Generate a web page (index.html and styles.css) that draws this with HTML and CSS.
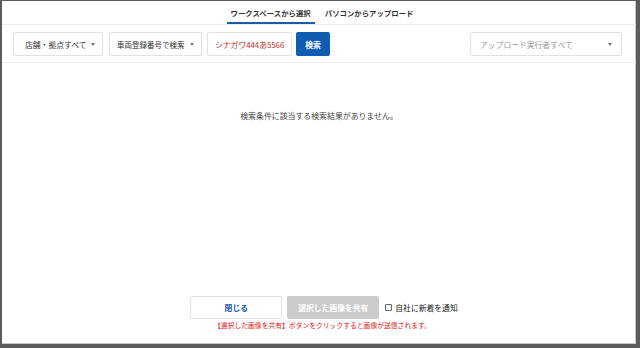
FILE: index.html
```html
<!DOCTYPE html>
<html lang="ja">
<head>
    <meta charset="UTF-8">
    <meta name="viewport" content="width=device-width, initial-scale=1.0">
    <title>画像を選択</title>
    <link rel="stylesheet" href="styles.css">
</head>
<body>

    <div class="modal">
        <div class="tabs">
            <span class="tab active">ワークスペースから選択</span>
            <span class="tab">パソコンからアップロード</span>
        </div>

        <div class="filters">
            <div class="select w1">店舗・拠点すべて<i class="arrow"></i></div>
            <div class="select w2">車両登録番号で検索<i class="arrow"></i></div>
            <div class="input">シナガワ444あ5566</div>
            <button class="btn-search">検索</button>
            <div class="select w3 placeholder">アップロード実行者すべて<i class="arrow"></i></div>
        </div>

        <div class="results">
            <p class="empty">検索条件に該当する検索結果がありません。</p>
        </div>

        <div class="footer">
            <div class="actions">
                <button class="btn-close">閉じる</button>
                <button class="btn-share" disabled>選択した画像を共有</button>
                <label class="notify"><span class="check"></span>自社に新着を通知</label>
            </div>
            <p class="note">【選択した画像を共有】ボタンをクリックすると画像が送信されます。</p>
        </div>
    </div>

</body>
</html>
```

FILE: styles.css
```css
* { box-sizing: border-box; }
body { margin: 0; font-family: "Noto Sans CJK JP", "Noto Sans", sans-serif; color: #333; background: #fff; }
.modal { height: 348px; display: flex; flex-direction: column; border-style: solid; border-color: #5c5c5c; border-width: 1px 4px 4px 2px; box-shadow: inset -1px -1px 0 #c8c8c8; }

.tabs { display: flex; justify-content: center; gap: 6px; border-bottom: 1px solid #ececec; padding-top: 6px; padding-left: 6px; }
.tab { font-size: 7.4px; font-weight: bold; color: #333; line-height: 11px; padding: 0 4px 4px; border-bottom: 2px solid transparent; }
.tab.active { border-bottom-color: #1c5ba8; }

.filters { display: flex; align-items: center; padding: 7px 14px 6px 11px; border-bottom: 1px solid #ececec; }
.select, .input { height: 24px; border: 1px solid #e2e2e2; border-radius: 2px; font-size: 7.8px; display: flex; align-items: center; background: #fff; }
.select { position: relative; padding-left: 11px; }
.w1 { width: 90px; margin-right: 6px; }
.w2 { width: 93px; margin-right: 5px; padding-left: 7px; font-size: 7.5px; }
.w3 { width: 152px; margin-left: auto; padding-left: 9px; }
.placeholder { color: #9a9a9a; }
.arrow { position: absolute; right: 7px; top: 10px; border-left: 2px solid transparent; border-right: 2px solid transparent; border-top: 3px solid #777; }
.w3 .arrow { right: 9px; }
.input { width: 85px; padding-left: 7px; color: #c62828; margin-right: 4px; }
.btn-search { width: 34px; height: 24px; border: none; border-radius: 2px; background: #0f5db3; color: #fff; font-family: inherit; font-size: 7.8px; font-weight: bold; padding: 0; }

.results { flex: 1; }
.empty { margin: 48px 0 0; text-align: center; font-size: 7.9px; line-height: 10px; color: #444; }

.footer { padding-bottom: 14px; }
.actions { display: flex; justify-content: center; align-items: center; gap: 5px; padding-left: 10px; }
button { font-family: inherit; cursor: pointer; }
.btn-close, .btn-share { width: 92px; height: 23px; border-radius: 2px; font-size: 7.8px; font-weight: bold; padding: 0; }
.btn-close { background: #fff; border: 1px solid #e2e2e2; color: #1c5ba8; }
.btn-share { background: #cccccc; border: none; color: #fff; }
.notify { display: flex; align-items: center; font-size: 7.8px; color: #222; margin-left: 1px; }
.check { width: 7px; height: 7px; border: 1px solid #666; border-radius: 1px; margin-right: 3px; }
.note { margin: 1px 0 0; text-align: center; font-size: 6.8px; line-height: 10px; color: #e02020; padding-left: 7px; }
```
